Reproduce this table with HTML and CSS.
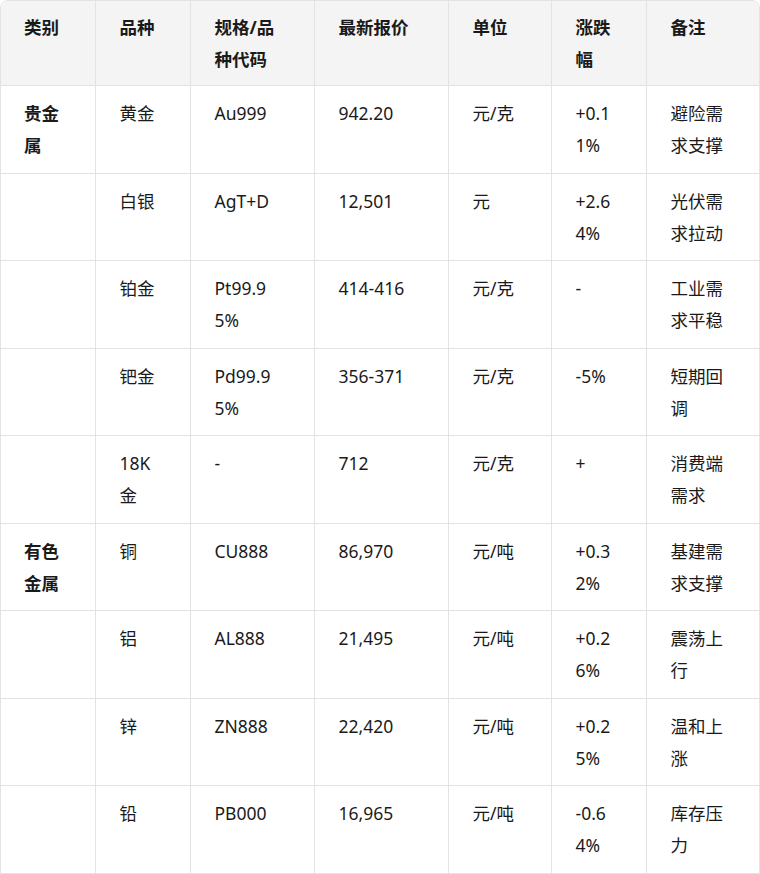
FILE: index.html
```html
<!DOCTYPE html>
<html lang="zh-CN">
<head>
<meta charset="utf-8">
<link rel="stylesheet" href="styles.css">
</head>
<body>
<div class="table-wrap">
<table class="price-table">
<colgroup>
<col class="c1"><col class="c2"><col class="c3"><col class="c4"><col class="c5"><col class="c6"><col class="c7">
</colgroup>
<thead>
<tr><th>类别</th><th>品种</th><th>规格/品种代码</th><th>最新报价</th><th>单位</th><th>涨跌幅</th><th>备注</th></tr>
</thead>
<tbody>
<tr><td class="cat">贵金属</td><td>黄金</td><td>Au999</td><td>942.20</td><td>元/克</td><td>+0.11%</td><td>避险需求支撑</td></tr>
<tr><td class="cat"></td><td>白银</td><td>AgT+D</td><td>12,501</td><td>元</td><td>+2.64%</td><td>光伏需求拉动</td></tr>
<tr><td class="cat"></td><td>铂金</td><td>Pt99.95%</td><td>414-416</td><td>元/克</td><td>-</td><td>工业需求平稳</td></tr>
<tr><td class="cat"></td><td>钯金</td><td>Pd99.95%</td><td>356-371</td><td>元/克</td><td>-5%</td><td>短期回调</td></tr>
<tr><td class="cat"></td><td>18K金</td><td>-</td><td>712</td><td>元/克</td><td>+</td><td>消费端需求</td></tr>
<tr><td class="cat">有色金属</td><td>铜</td><td>CU888</td><td>86,970</td><td>元/吨</td><td>+0.32%</td><td>基建需求支撑</td></tr>
<tr><td class="cat"></td><td>铝</td><td>AL888</td><td>21,495</td><td>元/吨</td><td>+0.26%</td><td>震荡上行</td></tr>
<tr><td class="cat"></td><td>锌</td><td>ZN888</td><td>22,420</td><td>元/吨</td><td>+0.25%</td><td>温和上涨</td></tr>
<tr><td class="cat"></td><td>铅</td><td>PB000</td><td>16,965</td><td>元/吨</td><td>-0.64%</td><td>库存压力</td></tr>
</tbody>
</table>
</div>
</body>
</html>
```

FILE: styles.css
```css
html, body {
  margin: 0;
  padding: 0;
  background: #ffffff;
}

body {
  font-family: "Noto Sans", "Noto Sans CJK SC", sans-serif;
  font-size: 17.5px;
  color: #1a1a1a;
}

.table-wrap {
  width: 760px;
  box-sizing: border-box;
  border: 1px solid #e3e3e3;
  border-radius: 8px 8px 0 0;
  overflow: hidden;
}

.price-table {
  width: 100%;
  border-collapse: collapse;
  table-layout: fixed;
}

.c1 { width: 94px; }
.c2 { width: 95px; }
.c3 { width: 124px; }
.c4 { width: 134px; }
.c5 { width: 103px; }
.c6 { width: 95px; }

.price-table th,
.price-table td {
  text-align: left;
  vertical-align: top;
  line-height: 32px;
  padding: 11.25px 24px;
  border: 1px solid #e3e3e3;
  word-break: break-all;
  overflow-wrap: anywhere;
}

.price-table tr > :first-child { border-left: none; padding-left: 23px; }
.price-table tr > :last-child { border-right: none; }
.price-table thead th { border-top: none; }
.price-table tbody tr:last-child td { border-bottom: none; }

.price-table th {
  background: #f4f4f4;
  font-weight: 700;
  padding-top: 10px;
  padding-bottom: 10px;
}

.price-table td.cat {
  font-weight: 700;
}
```
